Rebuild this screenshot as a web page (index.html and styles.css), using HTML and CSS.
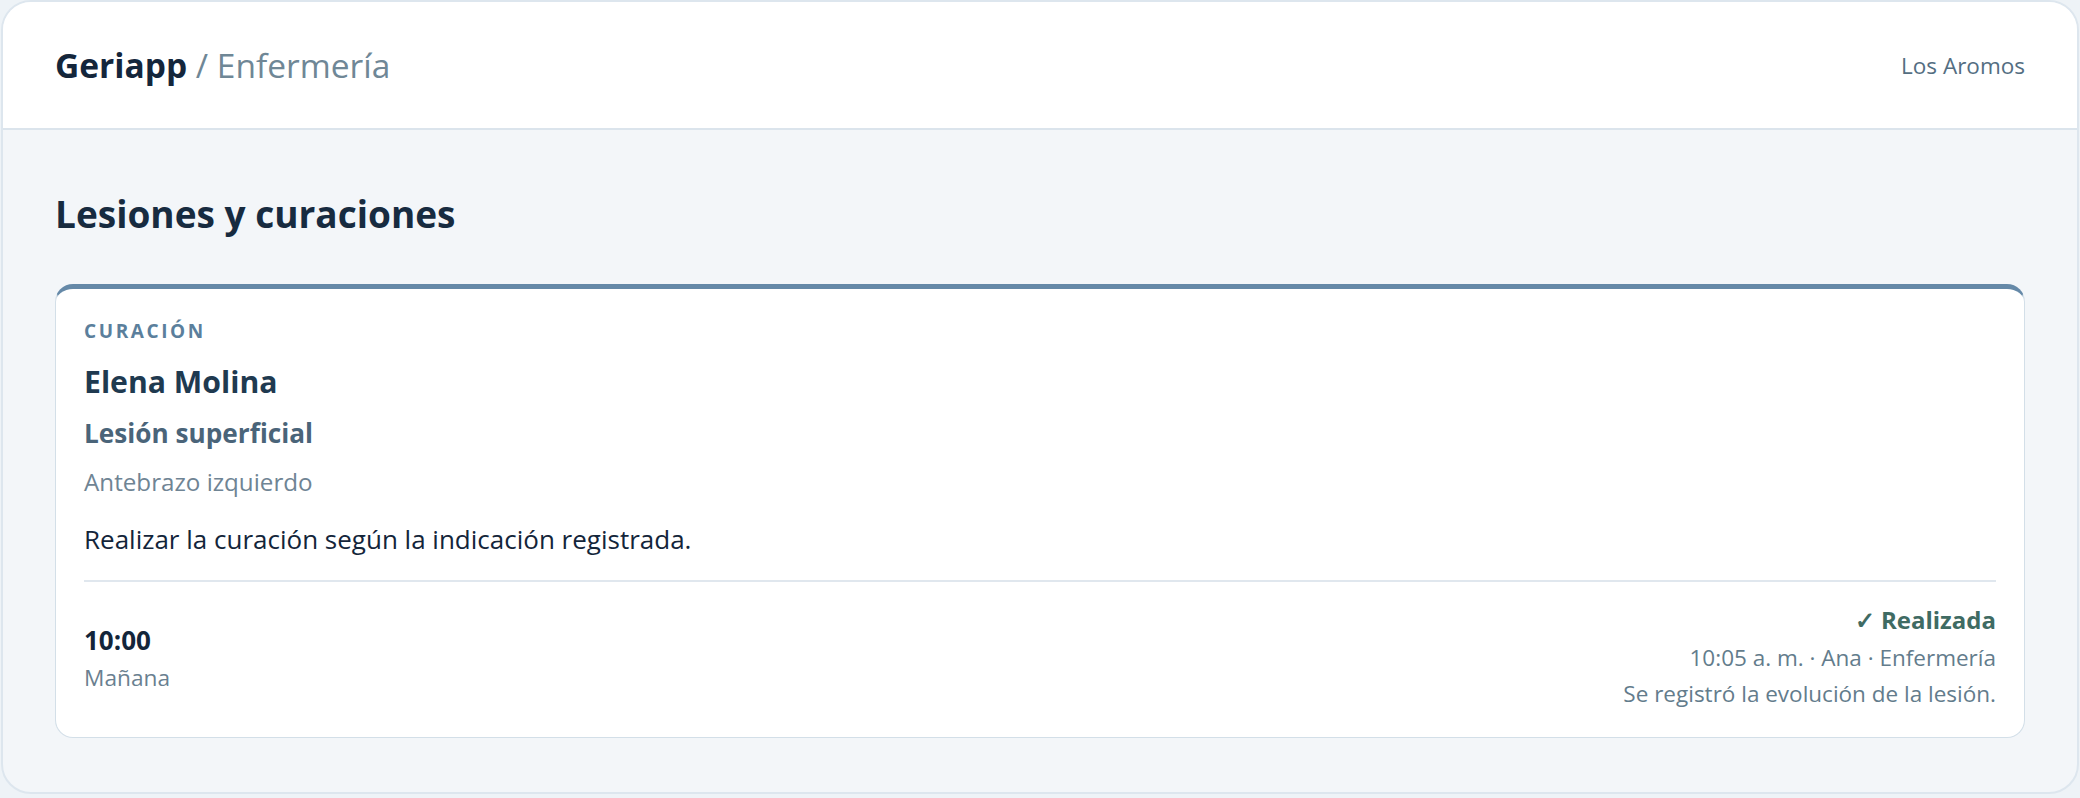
FILE: index.html
```html
<!DOCTYPE html>
<html lang="es">
<head>
    <meta charset="UTF-8">
    <meta name="viewport" content="width=device-width, initial-scale=1.0">
    <title>Geriapp / Enfermería</title>
    <link rel="stylesheet" href="styles.css">
</head>
<body>
    <div class="app">
        <header class="topbar">
            <div class="brand"><strong>Geriapp</strong> <span>/ Enfermería</span></div>
            <div class="site">Los Aromos</div>
        </header>

        <main class="content">
            <h1>Lesiones y curaciones</h1>

            <!-- Tarjeta de curación -->
            <section class="card">
                <div class="kicker">Curación</div>
                <div class="resident">Elena Molina</div>
                <div class="lesion">Lesión superficial</div>
                <div class="location">Antebrazo izquierdo</div>
                <p class="note">Realizar la curación según la indicación registrada.</p>

                <div class="card-footer">
                    <div class="slot">
                        <div class="time">10:00</div>
                        <div class="shift">Mañana</div>
                    </div>
                    <div class="status">
                        <div class="done">✓ Realizada</div>
                        <div class="meta">10:05 a. m. · Ana · Enfermería</div>
                        <div class="meta">Se registró la evolución de la lesión.</div>
                    </div>
                </div>
            </section>
        </main>
    </div>
</body>
</html>
```

FILE: styles.css
```css
body {
    margin: 0;
    font-family: "Open Sans", "Noto Sans", Arial, sans-serif;
    background: #eef3f7;
}
.app {
    margin: 0 1px;
    height: 794px;
    box-sizing: border-box;
    border: 2px solid #dde6ee;
    border-radius: 30px;
    background: #f3f6f9;
    overflow: hidden;
}
.topbar {
    height: 126px;
    display: flex;
    align-items: center;
    justify-content: space-between;
    padding: 0 52px;
    background: #ffffff;
    border-bottom: 2px solid #dbe4ec;
}
.brand {
    font-size: 33.5px;
    color: #6f8796;
}
.brand strong {
    color: #14263b;
    font-weight: 700;
}
.site {
    font-size: 22.5px;
    color: #546e82;
}
.content {
    padding: 62px 52px 0 52px;
}
h1 {
    margin: 0 0 48px 0;
    font-size: 37px;
    line-height: 44px;
    font-weight: 700;
    color: #172b40;
}
.card {
    background: #ffffff;
    border: 1px solid #d3dfe8;
    border-top: 5px solid #6589a8;
    border-radius: 18px;
    padding: 30px 28px 25px 28px;
}
.kicker {
    font-size: 19px;
    line-height: 24px;
    font-weight: 700;
    letter-spacing: 2.6px;
    text-transform: uppercase;
    color: #5b7f9c;
}
.resident {
    margin-top: 20px;
    font-size: 30.2px;
    line-height: 38px;
    font-weight: 700;
    color: #1f3a50;
}
.lesion {
    margin-top: 15px;
    font-size: 26.2px;
    line-height: 34px;
    font-weight: 700;
    color: #4a6479;
}
.location {
    margin-top: 17px;
    font-size: 24.2px;
    line-height: 30px;
    color: #6f8494;
}
.note {
    margin: 25px 0 0 0;
    font-size: 26px;
    line-height: 34px;
    color: #13253a;
}
.card-footer {
    margin-top: 24px;
    padding-top: 22px;
    border-top: 2px solid #e0e7ee;
    display: flex;
    justify-content: space-between;
    align-items: center;
}
.time {
    font-size: 26px;
    line-height: 34px;
    font-weight: 700;
    color: #13253a;
}
.shift {
    margin-top: 6px;
    font-size: 22.7px;
    line-height: 30px;
    color: #6a7f90;
}
.status {
    text-align: right;
}
.done {
    font-size: 24px;
    line-height: 32px;
    font-weight: 700;
    color: #3f6b63;
    margin-bottom: 4px;
}
.meta {
    font-size: 22.5px;
    line-height: 36px;
    color: #637c8c;
}
```
